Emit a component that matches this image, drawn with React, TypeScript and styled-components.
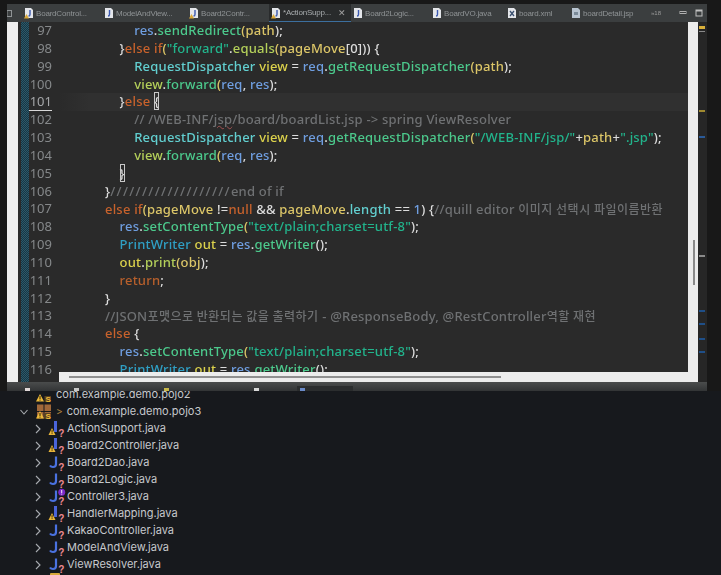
import React from "react";
import styled, { createGlobalStyle } from "styled-components";

const Global = createGlobalStyle`
  html, body { margin: 0; padding: 0; background: #16181c; }
  #root { width: 721px; height: 575px; overflow: hidden; }
`;

const Page = styled.div`
  width: 721px; height: 575px; overflow: hidden; background: #16181c;
  display: flex; flex-direction: column;
`;
const Shot = styled.div`
  height: 391px; flex: none; background: #181818; padding: 4px 14px 0 7px; box-sizing: border-box;
  filter: blur(0.35px);
`;
const Win = styled.div`
  height: 387px; display: flex; flex-direction: column; background: #3a3c3d;
`;
const TabBar = styled.div`
  height: 18px; flex: none; display: flex; align-items: center; background: #3b3e3f;
  font: 8px "Liberation Sans", Arial, sans-serif; color: #8f9395;
`;
const TabLead = styled.div`
  width: 15px; flex: none; height: 18px; display: flex; align-items: center;
`;
const Tab = styled.div<{ $w: number; $active?: boolean }>`
  width: ${p => p.$w}px; height: 18px; flex: none; box-sizing: border-box; display: flex; align-items: center;
  gap: 2px; padding-left: 2px; white-space: nowrap; letter-spacing: -0.2px;
  background: ${p => p.$active ? "#292b2c" : "transparent"};
  border-bottom: ${p => p.$active ? "1px solid #3c6f9e" : "none"};
  color: ${p => p.$active ? "#a8acae" : "#8f9395"};
`;
const TabClose = styled.span`
  margin-left: auto; margin-right: 5px; font-size: 9px; color: #a0a0a0;
`;
const TabTools = styled.div`
  margin-left: auto; display: flex; align-items: center; height: 18px; gap: 8px; padding-right: 4px;
`;
const Overflow = styled.span`font-size: 6px; color: #9a9a9a; margin-right: 10px;`;
const Body = styled.div`
  height: 360px; flex: none; display: flex; position: relative; overflow: hidden;
`;
const WhiteStrip = styled.div`width: 11px; flex: none; background: #eeeeee;`;
const RulerGap = styled.div`width: 3px; flex: none; background: #2a2a2a;`;
const Ruler = styled.div`
  width: 8px; flex: none;
  background-image: repeating-conic-gradient(#2a5a6c 0 25%, #1a3642 0 50%);
  background-size: 2px 2px;
`;
const EditorCol = styled.div`
  flex: 1; min-width: 0; background: #2a2a2a; overflow: hidden; padding-top: 0.1px;
`;
const Row = styled.div<{ $current?: boolean }>`
  height: 17.83px; display: flex; align-items: center; white-space: pre;
  background: ${p => p.$current ? "linear-gradient(90deg,#2a2a2a 30px,#303030 60px)" : "transparent"};
  font: 500 13px/17.83px "Noto Sans", "Noto Sans CJK KR", sans-serif;
  letter-spacing: 0.2px; color: #d8d8d8;
`;
const Num = styled.span<{ $current?: boolean }>`
  width: 23px; flex: none; text-align: right; font-weight: 400; letter-spacing: 0;
  box-sizing: border-box; height: 17.83px;
  border-bottom: ${p => p.$current ? "1px solid #d8d8d8" : "none"};
  color: ${p => p.$current ? "#a4a6a8" : "#85888a"};
`;
const Code = styled.span<{ $in: number }>`
  padding-left: ${p => 53 + p.$in * 14.6}px;
`;
const T = styled.span<{ $c: string; $mark?: string }>`
  color: ${p => p.$c};
  ${p => p.$mark === "box" ? "outline: 1px solid #c8c8c8; outline-offset: -1px;" : ""}
  ${p => p.$mark === "wavy" ? "text-decoration: underline wavy #a05050 1px;" : ""}
  ${p => p.$mark === "wide" ? "letter-spacing: 1.35px;" : ""}
`;
const Ko = styled.span`
  font-family: "Noto Sans CJK KR", sans-serif; font-size: 12px; letter-spacing: 0.5px;
`;
const VBar = styled.div`
  width: 10px; flex: none; background: #ececec; position: relative;
`;
const VThumb = styled.div`
  position: absolute; left: 5px; top: 218px; width: 1.5px; height: 45px; background: #8a8a8a;
`;
const Overview = styled.div`width: 9px; flex: none; background: #262626; position: relative;`;
const Mark = styled.div<{ $y: number; $c: string; $h?: number }>`
  position: absolute; left: 1px; width: 6px; top: ${p => p.$y}px; height: ${p => p.$h ?? 2}px; background: ${p => p.$c};
`;
const HBar = styled.div`
  position: absolute; left: 52px; right: 9px; bottom: 0; height: 10px; background: #ececec;
  display: flex; align-items: center; padding-left: 10px; box-sizing: border-box;
`;
const HThumb = styled.div`width: 432px; height: 2px; background: #8f8f8f;`;
const BottomBar = styled.div`
  flex: 1; background: linear-gradient(#4a4c4c, #333536); display: flex; align-items: flex-end;
  padding-left: 18px; overflow: hidden;
`;
const BottomIcon = styled.div<{ $c: string; $ml: number }>`
  width: 5px; height: 3px; flex: none; background: ${p => p.$c}; margin-left: ${p => p.$ml}px;
`;
const BottomActive = styled.div`
  width: 56px; height: 5px; flex: none; background: #2b2d2e; margin-left: 38px; padding: 2px 0 0 3px; box-sizing: border-box;
`;
const Tree = styled.div`
  flex: 1; min-height: 0; background: #17191d; overflow: hidden;
  font: 11px/17px Inter, "Liberation Sans", sans-serif; color: #c6c8cc;
`;
const TreeInner = styled.div`margin-top: -5px;`;
const TreeRow = styled.div<{ $pkg?: boolean }>`
  height: 17px; display: flex; align-items: center; white-space: nowrap;
  padding-left: ${p => p.$pkg ? "20px" : "34px"};
`;
const Name = styled.span`margin-left: 1px;`;
const PkgName = styled.span`margin-left: 4px;`;
const PkgArrow = styled.span`color: #b5863f; margin: 0 3px 0 4px; font-size: 10px;`;
const FolderStub = styled.div`
  width: 10px; height: 4px; margin: 0 0 0 50px; background: #d8a83a; border-radius: 1px;
`;

const Chevron = ({ down }: { down?: boolean }) => (
  <svg width="8" height="10" viewBox="0 0 8 10" style={{ flex: "none" }}>
    <path d={down ? "M0.5 3 L4 7 L7.5 3" : "M2 1 L6 5 L2 9"} stroke="#a8abb0" strokeWidth="1.1" fill="none" />
  </svg>
);

const FileIcon = ({ warn, info, bar }: { warn?: boolean; info?: boolean; bar?: boolean }) => (
  <svg width="24" height="18" viewBox="0 0 24 18" style={{ flex: "none", overflow: "visible" }}>
    {bar ? <rect x="12" y="1" width="3" height="11" fill="#4a64d8" />
      : <path d="M14 2.5 V10 Q14 13 11 13 Q9 13 8 11.5" stroke="#4a72e0" strokeWidth="2.2" fill="none" />}
    {warn && <>
      <polygon points="10,8 13.5,15 6.5,15" fill="#e9b63a" />
      <rect x="9.6" y="10" width="0.9" height="2.6" fill="#2a2000" />
      <rect x="9.6" y="13.2" width="0.9" height="0.9" fill="#2a2000" />
    </>}
    {info && <>
      <circle cx="19.7" cy="4.2" r="3.5" fill="#7a28c8" />
      <rect x="19.2" y="2" width="1" height="3" fill="#f0e8ff" />
      <rect x="19.2" y="5.6" width="1" height="1" fill="#f0e8ff" />
    </>}
    <text x="16.2" y="16.5" fontFamily="Liberation Sans" fontWeight="700" fontSize="10" fill="#ee8a92">?</text>
  </svg>
);

const PkgIcon = ({ grid = true }: { grid?: boolean }) => (
  <svg width="16" height="16" viewBox="0 0 16 16" style={{ flex: "none", marginLeft: 8 }}>
    {grid && <>
      <rect x="1" y="0.5" width="6.5" height="6.5" fill="#a0683a" />
      <rect x="8.5" y="0.5" width="6.5" height="6.5" fill="#a0683a" />
      <rect x="8.5" y="8" width="6.5" height="6.5" fill="#a0683a" />
      <rect x="1" y="8" width="6.5" height="6.5" fill="#a0683a" />
    </>}
    <polygon points="4,7 8,14.5 0,14.5" fill="#ecb93a" />
    <rect x="3.5" y="9" width="1" height="3" fill="#2a2000" />
    <rect x="3.5" y="12.6" width="1" height="1" fill="#2a2000" />
    <rect x="8.5" y="9" width="6.5" height="6" fill="#5a4020" />
    <text x="9.5" y="14.8" fontFamily="Liberation Sans" fontWeight="700" fontSize="8" fill="#ecb93a">S</text>
  </svg>
);

const DocIcon = ({ kind }: { kind: "j" | "x" | "p" | "w" }) => (
  <svg width="10" height="12" viewBox="1 0 10 12" style={{ flex: "none" }}>
    <path d="M2 1 H8 L10 3 V11 H2 Z" fill={kind === "p" ? "#b8c4d0" : "#e4e6ea"} />
    {kind === "j" && <path d="M6.5 3 V7.5 Q6.5 9 5 9" stroke="#3a58b0" strokeWidth="1.4" fill="none" />}
    {kind === "w" && <><path d="M7 3 V7.5 Q7 9 5.5 9" stroke="#3a58b0" strokeWidth="1.4" fill="none" /><polygon points="3.5,7 6,11.5 1,11.5" fill="#d8a83a" /></>}
    {kind === "x" && <path d="M4 4 L8 9 M8 4 L4 9" stroke="#3a5070" strokeWidth="1.3" />}
    {kind === "p" && <rect x="4" y="5" width="4" height="3" fill="#7a8a98" />}
  </svg>
);

const C = {
  blue: "#6f9ee0", green: "#4cc98c", gold: "#dcc668", yellow: "#dcd24c", lime: "#b4d05a",
  orange: "#c8622c", teal: "#22b48c", white: "#dcdcdc", cyan: "#62cfd0", gray: "#6f7173",
  pblue: "#2f9fc4", kw: "#b8602c",
};

type Tok = [string, string, string?];
const code: { n: number; i: number; t: Tok[]; cur?: boolean }[] = [
  { n: 97, i: 2, t: [["res", C.blue], [".", C.white], ["sendRedirect", C.green], ["(", C.gold], ["path", C.gold], [");", C.white]] },
  { n: 98, i: 1, t: [["}", C.white], ["else if", C.orange], ["(", C.gold], ['"forward"', C.teal], [".", C.white], ["equals", C.lime], ["(", C.gold], ["pageMove", C.gold], ["[0]", C.white], ["))", C.white], [" {", C.white]] },
  { n: 99, i: 2, t: [["RequestDispatcher", C.cyan], [" ", C.white], ["view", C.yellow], [" = ", C.white], ["req", C.blue], [".", C.white], ["getRequestDispatcher", C.green], ["(", C.gold], ["path", C.gold], [");", C.white]] },
  { n: 100, i: 2, t: [["view", C.lime], [".", C.white], ["forward", C.green], ["(", C.gold], ["req", C.blue], [", ", C.white], ["res", C.blue], [");", C.white]] },
  { n: 101, i: 1, cur: true, t: [["}", C.white], ["else", C.orange], [" ", C.white], ["{", C.white, "box"]] },
  { n: 102, i: 2, t: [["// /WEB-INF/", C.gray], ["jsp", C.gray, "wavy"], ["/board/boardList.jsp -> spring ViewResolver", C.gray]] },
  { n: 103, i: 2, t: [["RequestDispatcher", C.cyan], [" ", C.white], ["view", C.yellow], [" = ", C.white], ["req", C.blue], [".", C.white], ["getRequestDispatcher", C.green], ["(", C.gold], ['"/WEB-INF/jsp/"', C.teal], ["+", C.white], ["path", C.gold], ["+", C.white], ['".jsp"', C.teal], [");", C.white]] },
  { n: 104, i: 2, t: [["view", C.lime], [".", C.white], ["forward", C.green], ["(", C.gold], ["req", C.blue], [", ", C.white], ["res", C.blue], [");", C.white]] },
  { n: 105, i: 1, t: [["}", C.white, "box"]] },
  { n: 106, i: 0, t: [["}", C.white], ["///////////////////", C.gray, "wide"], ["end of if", C.gray]] },
  { n: 107, i: 0, t: [["else if", C.orange], ["(", C.gold], ["pageMove", C.gold], [" !=", C.white], ["null", C.orange], [" && ", C.white], ["pageMove", C.gold], [".", C.white], ["length", C.cyan], [" == ", C.white], ["1", C.blue], [") {", C.white], ["//quill editor ", C.gray], ["이미지 선택시 파일이름반환", "ko"]] },
  { n: 108, i: 1, t: [["res", C.blue], [".", C.white], ["setContentType", C.green], ["(", C.gold], ['"text/plain;charset=utf-8"', C.teal], [");", C.white]] },
  { n: 109, i: 1, t: [["PrintWriter", C.pblue], [" ", C.white], ["out", C.yellow], [" = ", C.white], ["res", C.blue], [".", C.white], ["getWriter", C.green], ["();", C.white]] },
  { n: 110, i: 1, t: [["out", C.yellow], [".", C.white], ["print", C.lime], ["(", C.gold], ["obj", C.gold], [");", C.white]] },
  { n: 111, i: 1, t: [["return", C.kw], [";", C.white]] },
  { n: 112, i: 0, t: [["}", C.white]] },
  { n: 113, i: 0, t: [["//JSON", C.gray], ["포맷으로 반환되는 값을 출력하기", "ko"], [" - @ResponseBody, @RestController", C.gray], ["역할 재현", "ko"]] },
  { n: 114, i: 0, t: [["else", C.orange], [" {", C.white]] },
  { n: 115, i: 1, t: [["res", C.blue], [".", C.white], ["setContentType", C.green], ["(", C.gold], ['"text/plain;charset=utf-8"', C.teal], [");", C.white]] },
  { n: 116, i: 1, t: [["PrintWriter", C.pblue], [" ", C.white], ["out", C.yellow], [" = ", C.white], ["res", C.blue], [".", C.white], ["getWriter", C.green], ["();", C.white]] },
];

const tabs: { label: string; w: number; kind: "j" | "x" | "p" | "w"; active?: boolean }[] = [
  { label: "BoardControl...", w: 80, kind: "w" },
  { label: "ModelAndView...", w: 85, kind: "j" },
  { label: "Board2Contr...", w: 82, kind: "w" },
  { label: "*ActionSupp...", w: 82, kind: "w", active: true },
  { label: "Board2Logic...", w: 79, kind: "j" },
  { label: "BoardVO.java", w: 75, kind: "j" },
  { label: "board.xml", w: 64, kind: "x" },
  { label: "boardDetail.jsp", w: 70, kind: "p" },
];

const files: { name: string; warn?: boolean; info?: boolean; bar?: boolean }[] = [
  { name: "ActionSupport.java", warn: true, bar: true },
  { name: "Board2Controller.java", warn: true, bar: true },
  { name: "Board2Dao.java" },
  { name: "Board2Logic.java" },
  { name: "Controller3.java", info: true },
  { name: "HandlerMapping.java", warn: true, bar: true },
  { name: "KakaoController.java" },
  { name: "ModelAndView.java" },
  { name: "ViewResolver.java" },
];

export default function App() {
  return (
    <Page>
      <Global />
      <Shot>
        <Win>
          <TabBar>
            <TabLead>
              <svg width="5" height="7" viewBox="0 0 5 7"><rect x="0" y="0.5" width="4.5" height="6" fill="none" stroke="#8f9395" /></svg>
            </TabLead>
            {tabs.map(t => (
              <Tab key={t.label} $w={t.w} $active={t.active}>
                <DocIcon kind={t.kind} />
                <span>{t.label}</span>
                {t.active && <TabClose>✕</TabClose>}
              </Tab>
            ))}
            <TabTools>
              <Overflow>»18</Overflow>
              <svg width="8" height="8" viewBox="0 0 8 8"><rect x="1" y="2.5" width="6" height="2" fill="none" stroke="#b0b0b0" /></svg>
              <svg width="8" height="8" viewBox="0 0 8 8"><rect x="1" y="1" width="6" height="6" fill="none" stroke="#c0c0c0" /><rect x="1" y="1" width="6" height="1.5" fill="#c0c0c0" /></svg>
            </TabTools>
          </TabBar>
          <Body>
            <WhiteStrip />
            <RulerGap />
            <Ruler />
            <EditorCol>
              {code.map(l => (
                <Row key={l.n} $current={l.cur}>
                  <Num $current={l.cur}>{l.n}</Num>
                  <Code $in={l.i}>
                    {l.t.map(([s, c, m], i) =>
                      c === "ko"
                        ? <T key={i} $c={C.gray}><Ko>{s}</Ko></T>
                        : <T key={i} $c={c} $mark={m}>{s}</T>
                    )}
                  </Code>
                </Row>
              ))}
            </EditorCol>
            <VBar><VThumb /></VBar>
            <Overview>
              <Mark $y={4} $c="#d8b03a" $h={3} />
              <Mark $y={9} $c="#8a8a8a" $h={1} />
              <Mark $y={88} $c="#a08a30" />
              <Mark $y={114} $c="#2a5a98" />
              <Mark $y={233} $c="#8a8a8a" />
              <Mark $y={288} $c="#1f4f88" />
              <Mark $y={301} $c="#1f4f88" />
              <Mark $y={316} $c="#1f4f88" />
              <Mark $y={329} $c="#1f4f88" />
            </Overview>
            <HBar><HThumb /></HBar>
          </Body>
          <BottomBar>
            <BottomIcon $c="#e0d8d8" $ml={0} />
            <BottomIcon $c="#c8c8c8" $ml={44} />
            <BottomIcon $c="#c8b84a" $ml={85} />
            <BottomIcon $c="#d8d8d8" $ml={85} />
            <BottomActive><BottomIcon $c="#6a8ac8" $ml={0} /></BottomActive>
          </BottomBar>
        </Win>
      </Shot>
      <Tree>
        <TreeInner>
          <TreeRow $pkg>
            <svg width="8" height="10" style={{ flex: "none" }} />
            <PkgIcon grid={false} />
            <PkgName>com.example.demo.pojo2</PkgName>
          </TreeRow>
          <TreeRow $pkg>
            <Chevron down />
            <PkgIcon />
            <PkgArrow>&gt;</PkgArrow>
            <Name>com.example.demo.pojo3</Name>
          </TreeRow>
          {files.map(f => (
            <TreeRow key={f.name}>
              <Chevron />
              <FileIcon warn={f.warn} info={f.info} bar={f.bar} />
              <Name>{f.name}</Name>
            </TreeRow>
          ))}
          <FolderStub />
        </TreeInner>
      </Tree>
    </Page>
  );
}
